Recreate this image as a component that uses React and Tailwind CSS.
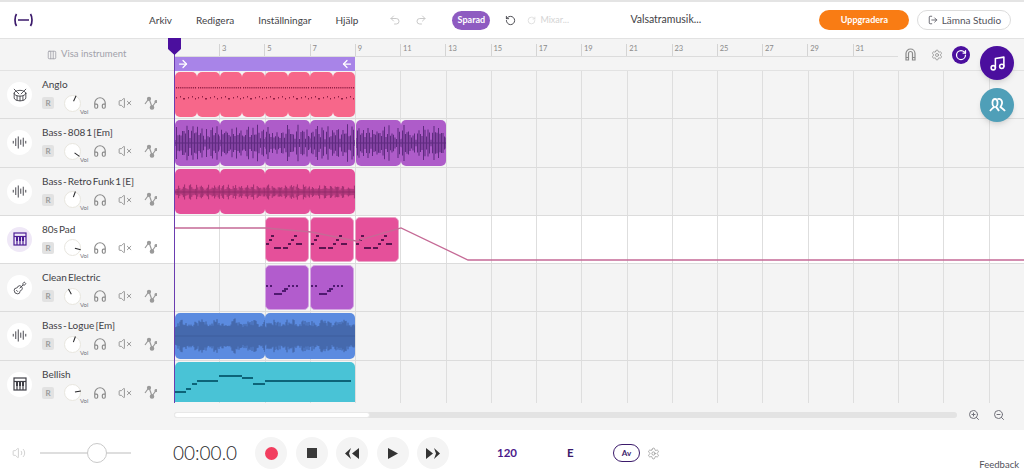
import React from 'react';
import { AudioLines, Columns3, Drum, Guitar, Headphones, Music, Redo2, RotateCcw, RotateCw, Settings, Undo2, Volume2, VolumeX, ZoomIn, ZoomOut, LogOut, ArrowLeft, ArrowRight } from 'lucide-react';

const BAR = 45.25;

// deterministic noise so the waveforms stay the same on every render
const noise = (i) => {
  const v = Math.sin(i * 12.9898) * 43758.5453;
  return v - Math.floor(v);
};

const Wave = ({ width, height, color, amp, base, step = 1.5, period = 8, seed = 1, thick = 0.7 }) => {
  let d = `M0 ${height / 2}H${width}`;
  for (let x = 0; x < width; x += step) {
    const pulse = 0.35 + 0.65 * Math.abs(Math.sin((x / period) * Math.PI));
    const h = base + pulse * amp * (0.3 + noise(x * 1.7 + seed) * 0.7);
    d += `M${x} ${height / 2 - h}V${height / 2 + h}`;
  }
  return (
    <svg width={width} height={height} className="absolute left-0 top-0">
      <path d={d} stroke={color} strokeWidth={step * thick} fill="none" />
    </svg>
  );
};

const Notes = ({ notes, color, height = 3 }) => (
  <svg width="100%" height="100%" className="absolute left-0 top-0">
    {notes.map(([x, y, w], i) => (
      <rect key={i} x={x} y={y} width={w} height={height} fill={color} />
    ))}
  </svg>
);

const padNotes = [[5, 17, 3], [28, 17, 3], [3, 21, 3], [25, 21, 3], [0, 25, 3], [22, 25, 3], [30, 25, 6], [8, 29, 7], [17, 29, 5]];
const cleanNotes = [[0, 19, 2], [4, 19, 2], [22, 19, 2], [26, 19, 2], [30, 19, 2], [18, 22, 4], [16, 24, 4], [8, 27, 8]];
const bellNotes = [[0, 29, 11], [11, 26, 5], [17, 21, 5], [22, 18, 21], [44, 13, 23], [67, 15, 11], [78, 21, 12], [90, 18, 86]];

const drumNotes = () => {
  const out = [];
  for (let x = 1; x < 22; x += 1.9) out.push([x, 15, 1]);
  return out.concat([[1, 25, 1], [5, 24, 1], [8, 26, 2], [13, 25, 1], [17, 24, 1], [20, 26, 1]]);
};

const Clip = ({ left, width, color, children, className = '' }) => (
  <div
    className={`absolute top-[1px] bottom-[1px] rounded-[5px] overflow-hidden ${color} ${className}`}
    style={{ left, width }}
  >
    {children}
  </div>
);

const repeat = (count, size) => Array.from({ length: count }, (_, i) => i * size);

const PianoIcon = ({ color = '#3f3f46' }) => (
  <svg width="14" height="14" viewBox="0 0 14 14" fill="none" stroke={color} strokeWidth="1.2">
    <rect x="1" y="1" width="12" height="12" />
    <path d="M1 4.5h12" />
    <path d="M3 4.5h2v4.5H3zM6 4.5h2v4.5H6zM9 4.5h2v4.5H9z" fill={color} stroke="none" />
    <path d="M4 9v4M7 9v4M10 9v4" />
  </svg>
);

const AutomationIcon = () => (
  <svg width="13" height="15" viewBox="0 0 13 15" fill="none" stroke="#9a9a9a" strokeWidth="1.2">
    <path d="M1 8L5 2.5L8 11L12 5.5" />
    <circle cx="5" cy="2.8" r="1.5" fill="#9a9a9a" />
    <circle cx="8" cy="11.5" r="1.7" fill="#9a9a9a" />
    <circle cx="12" cy="5.5" r="1" fill="#9a9a9a" />
  </svg>
);

const tracks = [
  { name: 'Anglo', icon: <Drum size={14} strokeWidth={1.5} color="#3f3f46" />, knob: 25 },
  { name: 'Bass - 808 1 [Em]', icon: <AudioLines size={15} strokeWidth={1.5} color="#3f3f46" />, knob: 125 },
  { name: 'Bass - Retro Funk 1 [E]', icon: <AudioLines size={15} strokeWidth={1.5} color="#3f3f46" />, knob: 20 },
  { name: '80s Pad', icon: <PianoIcon color="#4c1d95" />, knob: 105, active: true },
  { name: 'Clean Electric', icon: <Guitar size={14} strokeWidth={1.5} color="#3f3f46" />, knob: -28 },
  { name: 'Bass - Logue [Em]', icon: <AudioLines size={15} strokeWidth={1.5} color="#3f3f46" />, knob: 20 },
  { name: 'Bellish', icon: <PianoIcon />, knob: 80, last: true },
];

const lanes = [
  repeat(8, BAR / 2).map((x) => (
    <Clip key={x} left={x - 0.5} width={BAR / 2 - 0.1} color="bg-[#f7678a]">
      <Notes notes={drumNotes()} color="#8f1f44" height={1.5} />
    </Clip>
  )),
  repeat(6, BAR).map((x) => (
    <Clip key={x} left={x - 0.5} width={BAR - 0.2} color="bg-[#ae5cc9]">
      <Wave width={46} height={46} color="#5f2b80" amp={18} base={1} period={5} seed={x} />
    </Clip>
  )),
  repeat(4, BAR).map((x) => (
    <Clip key={x} left={x - 0.5} width={BAR - 0.2} color="bg-[#e5509a]">
      <Wave width={46} height={46} color="#8e2a68" amp={7} base={1} step={1.2} period={6} seed={x} />
    </Clip>
  )),
  [2, 3, 4].map((n) => (
    <Clip key={n} left={n * BAR - 1} width={BAR - 1} color="bg-[#e5509a]" className="border border-[#e9a3c6]">
      <Notes notes={padNotes} color="#5c1550" height={2} />
    </Clip>
  )),
  [2, 3].map((n) => (
    <Clip key={n} left={n * BAR - 1} width={BAR - 1} color="bg-[#b25ccd]" className="border border-[#d3a6e2]">
      <Notes notes={cleanNotes} color="#4f1a70" height={2} />
    </Clip>
  )),
  [0, 2].map((n) => (
    <Clip key={n} left={n * BAR - 0.5} width={BAR * 2 - 0.3} color="bg-[#5b8be0]">
      <Wave width={91} height={46} color="#3f5f9c" amp={11} base={7} step={1} period={17} seed={n + 7} thick={1} />
    </Clip>
  )),
  <Clip key="bell" left={-0.5} width={BAR * 4 - 0.5} color="bg-[#49c3d6]" className="rounded-b-none">
    <Notes notes={bellNotes} color="#0d6478" height={2} />
  </Clip>,
];

const GridLines = () => (
  <div className="absolute inset-0 flex">
    {Array.from({ length: 19 }, (_, i) => (
      <div key={i} className="w-[45.25px] h-full shrink-0 border-r border-[#dedede]" />
    ))}
  </div>
);

const TrackRow = ({ track, children }) => (
  <div
    className={`flex shrink-0 ${track.last ? 'h-[42px]' : 'h-[48.25px] border-b border-[#dcdcdc]'} ${track.active ? 'bg-white' : 'bg-[#f4f4f4]'}`}
  >
    <div className="w-[174px] shrink-0 flex items-start pl-[7px] pt-[11px]">
      <div className={`w-[25px] h-[25px] rounded-full shrink-0 flex items-center justify-center ${track.active ? 'bg-[#efe8f7]' : 'bg-white'}`}>
        {track.icon}
      </div>
      <div className="ml-[10px] -mt-[4px]">
        <div className="text-[10px] leading-[12px] text-[#3f3f46] whitespace-nowrap [word-spacing:-1.5px]">{track.name}</div>
        <div className="flex items-center h-[24px] mt-[1px]">
          <div className="w-[12px] h-[12px] bg-[#e2e2e2] rounded-[2px] text-[8px] font-bold text-[#9a9a9a] flex items-center justify-center">R</div>
          <div className="relative w-[17px] h-[17px] ml-[10px] rounded-full bg-white border border-[#e8e6df]">
            <div className="absolute inset-0" style={{ transform: `rotate(${track.knob}deg)` }}>
              <div className="absolute left-[7px] -top-[1px] w-[1px] h-[6px] bg-[#27272a]" />
            </div>
            <span className="absolute left-[15px] top-[12px] text-[6px] leading-[8px] text-[#71717a]">Vol</span>
          </div>
          <Headphones size={14} strokeWidth={2} color="#8a8a8a" className="ml-[12px]" />
          <VolumeX size={14} strokeWidth={1.5} color="#8a8a8a" className="ml-[11px]" />
          <div className="ml-[12px]"><AutomationIcon /></div>
        </div>
      </div>
    </div>
    <div className="relative flex-1 overflow-hidden border-l border-[#7d5aa8]">
      <GridLines />
      {children}
    </div>
  </div>
);

const TransportButton = ({ children }) => (
  <div className="w-[32px] h-[32px] rounded-full bg-[#f4f4f4] flex items-center justify-center">{children}</div>
);

const rulerMarks = Array.from({ length: 15 }, (_, i) => 3 + i * 2);

export default function App() {
  return (
    <div className="relative w-full h-[474px] overflow-hidden bg-white font-['Lato',sans-serif]">
      {/* top bar */}
      <div className="h-[38px] flex items-center border-t-2 border-[#e4e4e4] text-[#3f3f46]">
        <svg width="21" height="14" viewBox="0 0 21 14" fill="none" stroke="#3b1a6b" strokeWidth="1.7" className="ml-[13px]">
          <path d="M3.5 1C1.5 4 1.5 10 3.5 13M17.5 1C19.5 4 19.5 10 17.5 13M5 7H16" />
        </svg>
        <nav className="flex items-center gap-[24px] ml-[115px] text-[10px] whitespace-nowrap">
          <span>Arkiv</span>
          <span>Redigera</span>
          <span>Inställningar</span>
          <span>Hjälp</span>
        </nav>
        <Undo2 size={12} color="#c9c9c9" className="ml-[31px]" />
        <Redo2 size={12} color="#c9c9c9" className="ml-[14px]" />
        <div className="ml-[25px] w-[38px] h-[19px] rounded-full bg-[#8e5bc1] text-white text-[9px] font-bold flex items-center justify-center">Sparad</div>
        <RotateCcw size={11} color="#3f3f46" className="ml-[15px]" />
        <RotateCw size={9} color="#d8d8d8" className="ml-[11px]" />
        <span className="ml-[4px] text-[9px] text-[#d4d4d4] w-[40px]">Mixar...</span>
        <span className="ml-[50px] w-[189px] text-[10.5px] text-[#3f3f46]">Valsatramusik...</span>
        <div className="w-[90px] h-[20px] rounded-full bg-[#f97c14] text-white text-[9px] font-bold flex items-center justify-center">Uppgradera</div>
        <div className="ml-[8px] w-[94px] h-[20px] rounded-full border border-[#dcdcdc] text-[10px] text-[#52525b] flex items-center justify-center gap-[4px]">
          <LogOut size={10} />
          Lämna Studio
        </div>
      </div>

      {/* ruler */}
      <div className="h-[33px] flex bg-[#f4f4f4] border-t border-b border-[#e2e2e2]">
        <div className="w-[174px] shrink-0 flex items-center pl-[47px] gap-[4px] text-[9.5px] text-[#a1a1aa]">
          <Columns3 size={10} />
          Visa instrument
        </div>
        <div className="relative flex-1">
          <div className="flex pl-[44px] h-[18px] border-b border-[#dcdcdc] mr-[129px] ml-[1px]">
            {rulerMarks.map((n) => (
              <div key={n} className="w-[45.25px] shrink-0 border-l border-[#d4d4d4] mt-[5px] pl-[2px] text-[7.5px] leading-[10px] text-[#8a8a8a]">{n}</div>
            ))}
          </div>
          <div className="absolute left-[1px] top-[18px] w-[180px] h-[14px] bg-[#a884e8] flex items-center justify-between px-[2px]">
            <ArrowRight size={12} color="white" strokeWidth={2.5} />
            <ArrowLeft size={12} color="white" strokeWidth={2.5} />
          </div>
          <div className="absolute right-[84px] top-[9px] flex items-center gap-[15px] text-[#8a8a8a]">
            <svg width="11" height="13" viewBox="0 0 11 13" fill="none" stroke="#8a8a8a" strokeWidth="1.2">
              <path d="M1 12V5.5a4.5 4.5 0 0 1 9 0V12H7.5V5.5a2 2 0 0 0-4 0V12z" />
              <path d="M1 9.5h2.5M7.5 9.5H10" />
            </svg>
            <Settings size={12} strokeWidth={1.5} />
          </div>
          <div className="absolute left-[778px] top-[7px] w-[18px] h-[18px] rounded-full bg-[#4b0f9e] flex items-center justify-center">
            <RotateCw size={12} color="white" strokeWidth={2.5} />
          </div>
        </div>
      </div>

      {/* tracks */}
      <div className="bg-[#f4f4f4] h-[359px] flex flex-col">
        {tracks.map((track, i) => (
          <TrackRow key={track.name} track={track}>
            {lanes[i]}
            {track.active && (
              <svg className="absolute inset-0 w-full h-full">
                <path d="M0 12H91L136 16L181 25L226 12L293 44H850" fill="none" stroke="#c56a96" strokeWidth="1.3" />
              </svg>
            )}
          </TrackRow>
        ))}

        {/* scrollbar */}
        <div className="flex items-center h-[14px] mt-[5px] pl-[174px]">
          <div className="w-[783px] h-[6px] rounded-full bg-[#e3e3e3]">
            <div className="w-[196px] h-[6px] rounded-full bg-white border border-[#e8e8e8]" />
          </div>
          <ZoomIn size={12} color="#71717a" className="ml-[11px]" />
          <ZoomOut size={12} color="#71717a" className="ml-[13px]" />
        </div>
      </div>

      {/* transport */}
      <div className="relative h-[45px] flex items-center -mt-[1px] pt-[3px]">
        <Volume2 size={14} strokeWidth={1.3} color="#c4c4c4" className="ml-[12px]" />
        <div className="relative ml-[14px] w-[91px] h-[2px] bg-[#dedede]">
          <div className="absolute left-[47px] -top-[9px] w-[20px] h-[20px] rounded-full bg-white border border-[#c9c9c9]" />
        </div>
        <span className="ml-[42px] w-[82px] text-[19px] font-light text-[#27272a]">00:00.0</span>
        <div className="flex gap-[8.5px]">
          <TransportButton><div className="w-[13px] h-[13px] rounded-full bg-[#f23e5f]" /></TransportButton>
          <TransportButton><div className="w-[10px] h-[10px] bg-[#3a3a3a]" /></TransportButton>
          <TransportButton>
            <svg width="14" height="11" viewBox="0 0 14 11" fill="#333"><path d="M6 0L0 5.5L6 11L4 5.5zM14 0L7 5.5L14 11z" /></svg>
          </TransportButton>
          <TransportButton>
            <svg width="10" height="11" viewBox="0 0 10 11" fill="#333"><path d="M0 0L10 5.5L0 11z" /></svg>
          </TransportButton>
          <TransportButton>
            <svg width="14" height="11" viewBox="0 0 14 11" fill="#333"><path d="M0 0L7 5.5L0 11zM8 0L14 5.5L8 11L10 5.5z" /></svg>
          </TransportButton>
        </div>
        <span className="ml-[48px] w-[70px] text-[11.5px] font-bold text-[#4b1a8a]">120</span>
        <span className="w-[46px] text-[11.5px] font-bold text-[#3b1a6b]">E</span>
        <div className="w-[27px] h-[18px] rounded-full border border-[#3b1a6b] text-[8px] font-bold text-[#3b1a6b] flex items-center justify-center">Av</div>
        <Settings size={13} strokeWidth={1.3} color="#8a8a8a" className="ml-[7px]" />
        <span className="absolute right-[5px] bottom-[2px] text-[9.5px] text-[#52525b]">Feedback</span>
      </div>

      {/* playhead */}
      <div className="absolute left-[174px] top-[52px] w-[1px] h-[351px] bg-[#6a3cb0]" />
      <svg width="13" height="17" viewBox="0 0 13 17" className="absolute left-[168px] top-[38px]">
        <path d="M0 0H13V11L6.5 17L0 11z" fill="#4b0f9e" />
      </svg>

      {/* floating buttons */}
      <div className="absolute left-[980px] top-[46px] w-[34px] h-[34px] rounded-full bg-[#4b0f9e] shadow-md flex items-center justify-center">
        <Music size={17} color="white" strokeWidth={2.2} />
      </div>
      <div className="absolute left-[980px] top-[88px] w-[34px] h-[34px] rounded-full bg-[#4f9fb8] shadow-md flex items-center justify-center">
        <svg width="17" height="14" viewBox="0 0 17 14" fill="none" stroke="white" strokeWidth="1.8">
          <path d="M1 13C2.5 11 4 10 5 9C2.5 7 3 1 6 1C9 1 9.5 7 7 9C8 10 9 11 10 13" />
          <path d="M8.5 1.2C11.5 0 13.5 2.5 13 5.5C12.8 7 12 8.2 11.5 9C12.5 10 15 11.5 16 13" />
        </svg>
      </div>
    </div>
  );
}
